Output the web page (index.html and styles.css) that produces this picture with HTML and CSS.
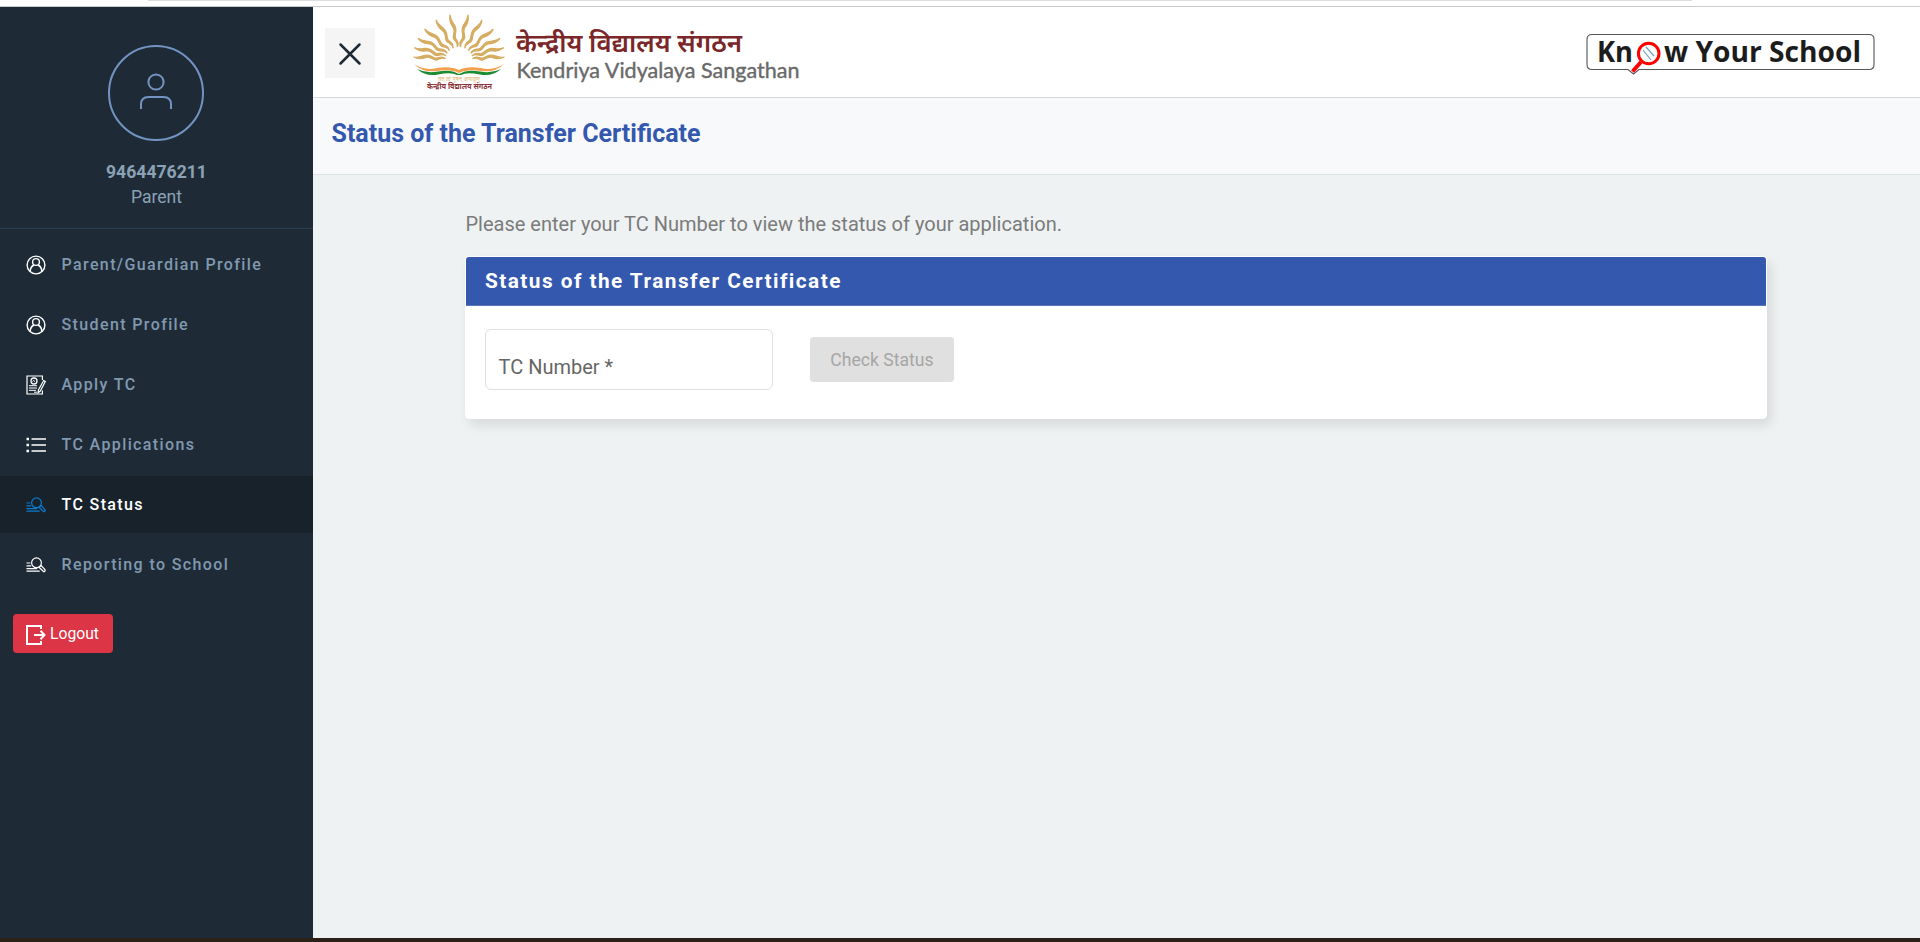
FILE: index.html
```html
<!DOCTYPE html>
<html lang="en">
<head>
<meta charset="utf-8">
<title>Status of the Transfer Certificate</title>
<link rel="stylesheet" href="styles.css">
</head>
<body>
<svg class="defs" aria-hidden="true">
  <symbol id="user" viewBox="0 0 20 20"><g fill="none" stroke="currentColor" stroke-width="1.4"><circle cx="10" cy="10" r="8.9"/><circle cx="10" cy="7" r="3.4"/><path d="M4.2 16.4C4.4 12.7 6.2 10.8 8 10M15.800 16.400C15.600 12.700 13.800 10.800 12 10"/></g></symbol>
  <symbol id="search" viewBox="0 0 20 20"><g fill="none" stroke="currentColor" stroke-width="1.2"><circle cx="10.5" cy="7.8" r="4.9"/><path d="M14 11.4l1.2-.9 3.7 4.1c.8 1.3-.7 2.5-1.7 1.6L13 12.3M.5 8h3.800M.5 10.900h4.600M.5 13.600h10.700M.5 16.200h13.200"/></g></symbol>
  <symbol id="ray" viewBox="0 -5 50 10" overflow="visible"><path d="M14-1C18-3 20 0 23 1S29-2 33-1 39 3 47 0C40 1 38-3 33-3S26 0 23-1 18-4 14-1Z"/></symbol>
</svg>
<div class="browser-edge"><div class="browser-line"></div></div>
<div class="app">
  <aside class="sidebar">
    <div class="profile">
      <div class="avatar"><svg width="40" height="40" viewBox="0 0 40 40" fill="none" stroke="currentColor" stroke-width="2"><circle cx="20" cy="10" r="7.6"/><path d="M5 37v-4.500Q5 25 12.500 25h15Q35 25 35 32.500V37"/></svg></div>
      <div class="phone">9464476211</div>
      <div class="role">Parent</div>
    </div>
    <nav class="menu">
      <a class="item"><svg class="icon"><use href="#user"/></svg>Parent/Guardian Profile</a>
      <a class="item"><svg class="icon"><use href="#user"/></svg>Student Profile</a>
      <a class="item"><svg class="icon" viewBox="0 0 20 20" fill="none" stroke="currentColor" stroke-width="1.2"><path d="M16.400 5V1H1v18h15.400v-3.500"/><circle cx="8" cy="6" r="3" stroke-width="1.300"/><path d="M6.500 6.500l1-1 1.500 1M3 10.700h8M3 13h8M3 15.300h7M8 17.200h3" stroke-width="1"/><path d="M17.700 5.500l1.600 1-5 9.500-2.200 1.700.3-2.700z"/></svg>Apply TC</a>
      <a class="item"><svg class="icon" viewBox="0 0 20 20" stroke="currentColor" stroke-width="1.500"><path d="M5.500 4H20M5.500 10H20M5.500 16H20"/><path d="M.5 4H3M.5 10H3M.5 16H3" stroke-width="2.500"/></svg>TC Applications</a>
      <a class="item active"><svg class="icon"><use href="#search"/></svg>TC Status</a>
      <a class="item"><svg class="icon"><use href="#search"/></svg>Reporting to School</a>
    </nav>
    <button class="logout"><svg width="20" height="20" viewBox="0 0 20 20" fill="none" stroke="currentColor" stroke-width="2"><path d="M15 4V1H1v18h14v-3"/><path d="M8 10h10M14.500 5.800L18.500 10l-4 4.200"/></svg>Logout</button>
  </aside>
  <div class="content">
    <header class="header">
      <button class="close"><svg width="24" height="24" viewBox="0 0 24 24" stroke="currentColor" stroke-width="2.500" stroke-linecap="round"><path d="M2.500 2.500l19 19M21.500 2.500l-19 19"/></svg></button>
      <svg class="logo" width="395" height="84" viewBox="410 10 395 84">
        <g fill="#d5ad62" stroke="#d5ad62" stroke-width="1.300">
          <g id="rays">
            <g transform="translate(459 61)">
              <use href="#ray" width="50" height="10" y="-5" transform="rotate(-79)"/>
              <use href="#ray" width="50" height="10" y="-5" transform="rotate(-60.700)"/>
              <use href="#ray" width="50" height="10" y="-5" transform="rotate(-43)"/>
              <use href="#ray" width="50" height="10" y="-5" transform="rotate(-29)"/>
              <use href="#ray" width="50" height="10" y="-5" transform="rotate(-16.500) scale(.99 1)"/>
              <use href="#ray" width="50" height="10" y="-5" transform="rotate(-5) scale(.97 1)"/>
            </g>
          </g>
          <use href="#rays" transform="matrix(-1 0 0 1 918 0)"/>
        </g>
        <path d="M414 64Q425 71 437 68 451 66 459 70 467 66 481 68 493 71 504 64 495 73 481 71 467 69 459 73 451 69 437 71 423 73 414 64Z" fill="#f2a04e"/>
        <path d="M417 69Q427 74 438 71.500 451 69 459 74 467 69 480 71.500 491 74 501 69 492 77 480 74.500 466 72 461 75H457Q451 72 438 74.500 426 77 417 69Z" fill="#1a8b30"/>
        <text class="hindi" x="438" y="81" font-size="6" textLength="42" lengthAdjust="spacingAndGlyphs" fill="#ddb574">तत् त्वं पूषन् अपावृणु</text>
        <text class="hindi" x="427" y="89" font-size="7.500" font-weight="700" textLength="65" lengthAdjust="spacingAndGlyphs" fill="#8c3338">केन्द्रीय विद्यालय संगठन</text>
        <text class="hindi" x="516" y="51.500" font-size="26" font-weight="600" textLength="226" lengthAdjust="spacingAndGlyphs" fill="#7b2629">केन्द्रीय विद्यालय संगठन</text>
        <text class="latin" x="516.500" y="77.500" font-size="22" textLength="283" lengthAdjust="spacingAndGlyphs" fill="#696969" stroke="#696969" stroke-width=".4">Kendriya Vidyalaya Sangathan</text>
      </svg>
      <svg class="know" width="290" height="44" viewBox="1586 33 290 44">
        <path d="M1592 34.500H1869Q1874 34.500 1874 39.500V64.500Q1874 69.500 1869 69.500H1639L1633.500 74 1628 69.500H1592Q1587 69.500 1587 64.500V39.500Q1587 34.500 1592 34.500Z" fill="#fff" stroke="#555" stroke-width="1.100"/>
        <g class="know-text" font-size="28" font-weight="700" fill="#1c1c1c">
          <text x="1597" y="62" textLength="36" lengthAdjust="spacingAndGlyphs">Kn</text>
          <text x="1664" y="62" textLength="197" lengthAdjust="spacingAndGlyphs">w Your School</text>
        </g>
        <circle cx="1648.700" cy="53.500" r="10.300" fill="#fff" stroke="#f00" stroke-width="3"/>
        <path d="M1641 62l-8.500 9.500" stroke="#f00" stroke-width="4"/>
        <path d="M1643 50l8 10M1646 47l8 9" stroke="#6e9fc0" stroke-width="1.200"/>
      </svg>
    </header>
    <div class="title-bar"><h1>Status of the Transfer Certificate</h1></div>
    <main class="main">
      <p class="intro">Please enter your TC Number to view the status of your application.</p>
      <section class="card">
        <h2 class="card-title">Status of the Transfer Certificate</h2>
        <div class="form">
          <div class="field">TC Number *</div>
          <button class="check" disabled>Check Status</button>
        </div>
      </section>
    </main>
  </div>
</div>
<div class="desktop-edge"></div>
</body>
</html>
```
FILE: styles.css
```css
* { box-sizing: border-box; }
body {
  margin: 0;
  height: 942px;
  display: flex;
  flex-direction: column;
  overflow: hidden;
  background: #fff;
  font-family: Roboto, sans-serif;
}
button { font-family: inherit; border: 0; padding: 0; }
h1, h2, p { margin: 0; }
.defs { display: none; }
.browser-edge { height: 7px; flex: none; border-bottom: 1px solid #c9cccb; }
.browser-line { height: 1px; margin: 0 228px 0 148px; background: #dedede; }
.app { flex: 1; display: flex; min-height: 0; }
.desktop-edge { height: 4px; flex: none; background: #2c2119; }

.sidebar { width: 313px; flex: none; background: #1e2b37; color: #8ba2b5; }
.profile {
  height: 222px;
  padding-top: 38px;
  display: flex;
  flex-direction: column;
  align-items: center;
  border-bottom: 1px solid #2b3f51;
}
.avatar {
  width: 96px;
  height: 96px;
  margin-right: 1px;
  border: 2px solid #7393c2;
  border-radius: 50%;
  color: #7393c2;
  display: flex;
  align-items: center;
  justify-content: center;
  padding-bottom: 2px;
}
.phone { margin-top: 19px; font-size: 17.6px; line-height: 24px; font-weight: 700; }
.role { font-size: 17.6px; line-height: 26px; }
.menu { display: flex; flex-direction: column; gap: 3px; padding-top: 7px; }
.item {
  height: 57px;
  padding-left: 25.5px;
  display: flex;
  align-items: center;
  gap: 16px;
  font-size: 16px;
  font-weight: 500;
  letter-spacing: 1.38px;
  color: #8199af;
}
.icon { width: 20px; height: 20px; color: #fff; }
.item.active { background: #17222b; color: #fff; }
.item.active .icon { color: #0b7bd0; }
.logout {
  margin: 21px 0 0 13px;
  width: 100px;
  height: 39px;
  padding-left: 13px;
  display: flex;
  align-items: center;
  gap: 4px;
  background: #dc3545;
  color: #fff;
  border-radius: 4px;
  font-size: 15.7px;
}
.logout svg { position: relative; top: 1px; }

.content { flex: 1; display: flex; flex-direction: column; background: #eef2f3; }
.header {
  height: 91px;
  padding: 3px 44px 0 12px;
  display: flex;
  align-items: flex-start;
  background: #fff;
  border-bottom: 1px solid #d4dadc;
}
.close {
  width: 50px;
  height: 50px;
  margin-top: 18px;
  padding-top: 2px;
  display: flex;
  align-items: center;
  justify-content: center;
  background: #f5f5f5;
  color: #1e2b37;
}
.logo { margin-left: 35px; overflow: visible; }
.know { margin: 23px 0 0 auto; }
.hindi { font-family: "Noto Sans Devanagari", "Noto Sans", sans-serif; }
.latin { font-family: Lato, sans-serif; }
.know-text { font-family: "Open Sans", sans-serif; }
.title-bar {
  height: 77px;
  padding: 20px 18.5px;
  background: #f8f9fb;
  border-bottom: 1px solid #dae3e4;
}
.title-bar h1 { font-size: 25px; line-height: 31px; font-weight: 700; color: #3358ae; }
.main { padding: 35px 153px 0 152px; }
.intro { padding-left: .5px; font-size: 20px; line-height: 28px; color: #7b7b7b; }
.card {
  margin-top: 18px;
  height: 163px;
  border: 1px solid #fff;
  border-radius: 4px;
  background: #fff;
  box-shadow: 4px 6px 12px rgba(0, 0, 0, .1);
}
.card-title {
  height: 49px;
  padding-left: 19px;
  border-bottom: 1px solid #5b75ba;
  border-radius: 3px 3px 0 0;
  background: #3358ae;
  color: #fff;
  font-size: 20.8px;
  line-height: 48px;
  font-weight: 700;
  letter-spacing: 1.46px;
}
.form { display: flex; align-items: center; gap: 37px; padding: 23px 19px; }
.field {
  width: 288px;
  height: 61px;
  padding: 23px 12px 0 12.5px;
  border: 1px solid #e0e0e0;
  border-radius: 6px;
  font-size: 20px;
  line-height: 28px;
  color: #666;
}
.check {
  width: 144px;
  height: 45px;
  border-radius: 4px;
  background: #e0e0e0;
  color: #a6a6a6;
  font-size: 17.6px;
}
```
